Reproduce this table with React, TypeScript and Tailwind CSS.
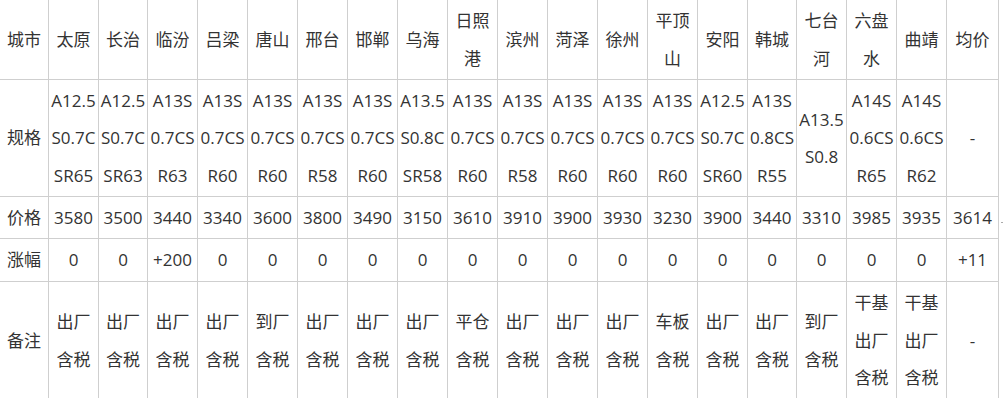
import React from "react";

const rows: string[][] = [
  ["城市", "太原", "长治", "临汾", "吕梁", "唐山", "邢台", "邯郸", "乌海", "日照|港", "滨州", "菏泽", "徐州", "平顶|山", "安阳", "韩城", "七台|河", "六盘|水", "曲靖", "均价"],
  [
    "规格",
    "A12.5|S0.7C|SR65",
    "A12.5|S0.7C|SR63",
    "A13S|0.7CS|R63",
    "A13S|0.7CS|R60",
    "A13S|0.7CS|R60",
    "A13S|0.7CS|R58",
    "A13S|0.7CS|R60",
    "A13.5|S0.8C|SR58",
    "A13S|0.7CS|R60",
    "A13S|0.7CS|R58",
    "A13S|0.7CS|R60",
    "A13S|0.7CS|R60",
    "A13S|0.7CS|R60",
    "A12.5|S0.7C|SR60",
    "A13S|0.8CS|R55",
    "A13.5|S0.8",
    "A14S|0.6CS|R65",
    "A14S|0.6CS|R62",
    "-",
  ],
  ["价格", "3580", "3500", "3440", "3340", "3600", "3800", "3490", "3150", "3610", "3910", "3900", "3930", "3230", "3900", "3440", "3310", "3985", "3935", "3614"],
  ["涨幅", "0", "0", "+200", "0", "0", "0", "0", "0", "0", "0", "0", "0", "0", "0", "0", "0", "0", "0", "+11"],
  [
    "备注",
    "出厂|含税",
    "出厂|含税",
    "出厂|含税",
    "出厂|含税",
    "到厂|含税",
    "出厂|含税",
    "出厂|含税",
    "出厂|含税",
    "平仓|含税",
    "出厂|含税",
    "出厂|含税",
    "出厂|含税",
    "车板|含税",
    "出厂|含税",
    "出厂|含税",
    "到厂|含税",
    "干基|出厂|含税",
    "干基|出厂|含税",
    "-",
  ],
];

const App = () => {
  return (
    <div className="flex bg-white w-[1003px] h-[398px] overflow-hidden text-[#333] font-['Open_Sans','Noto_Sans_CJK_SC',sans-serif] text-[17px] leading-[37.5px]">
      <div className="grid shrink-0 grid-cols-[49px_50px_49px_50px_50px_50px_50px_50px_50px_50px_50px_50px_50px_50px_50px_49px_50px_50px_50px_52px] grid-rows-[80px_117px_42px_43px_118px]">
        {rows.map((row, r) =>
          row.map((cell, c) => (
            <div
              key={`${r}-${c}`}
              className="flex flex-col items-center justify-center text-center whitespace-nowrap border-r border-b border-[#cfcfcf]"
            >
              {cell.split("|").map((line, i) => (
                <span key={i}>{line}</span>
              ))}
            </div>
          ))
        )}
      </div>
      <div className="mt-[222px] ml-[2px] w-[2px] h-px bg-[#aaa]" />
    </div>
  );
};

export default App;
